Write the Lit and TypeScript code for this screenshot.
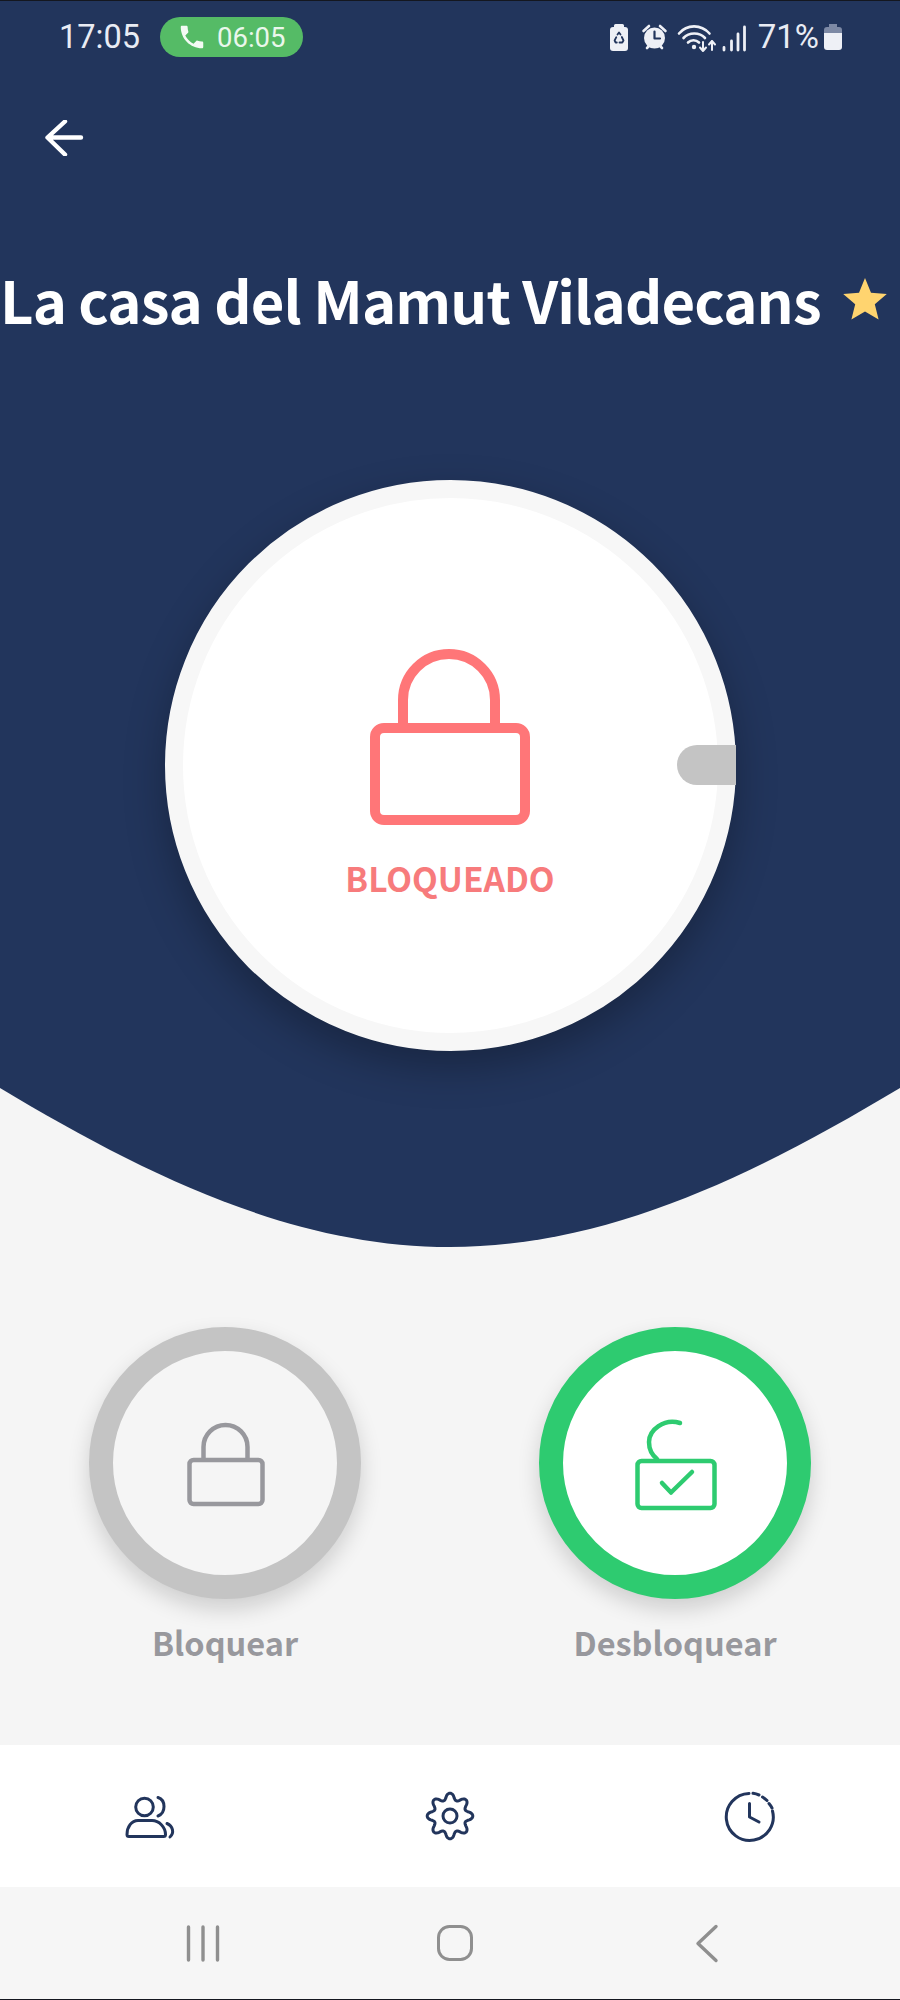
import { LitElement, html, css, svg } from "lit";
import { customElement } from "lit/decorators.js";

const gearPath = () => {
  const pts: string[] = [];
  const n = 160;
  for (let i = 0; i < n; i++) {
    const t = (i / n) * Math.PI * 2;
    const c = Math.cos(8 * t);
    const r = 19.6 + 3.2 * (Math.sign(c) * Math.pow(Math.abs(c), 0.8));
    const x = 450 + r * Math.sin(t);
    const y = 1816 - r * Math.cos(t);
    pts.push(`${x.toFixed(2)} ${y.toFixed(2)}`);
  }
  return "M" + pts.join("L") + "Z";
};

@customElement("app-root")
export class AppRoot extends LitElement {
  static styles = css`
    :host { display: block; width: 900px; height: 2000px; background: #f5f5f5; overflow: hidden; }
    svg { display: block; }
    .page { display: flex; flex-direction: column; width: 900px; height: 2000px; }
    .edge { height: 1px; background: #14171f; flex: none; }
    .hero {
      flex: none; height: 1247px; box-sizing: border-box; padding-top: 16px;
      background: #22355c; display: flex; flex-direction: column;
      clip-path: path("M0 0H900V1087C758 1172 610 1246 450 1246C290 1246 142 1172 0 1087Z");
    }
    .status { height: 40px; display: flex; align-items: center; padding: 0 58px 0 59px; color: #e9ecf4; font-family: Roboto, sans-serif; }
    .time { font-size: 32.5px; line-height: 40px; width: 81px; }
    .pill {
      margin-left: 20px; width: 143px; height: 40px; border-radius: 20px; background: #55bb66; color: #eaf7ec;
      display: flex; align-items: center; box-sizing: border-box; padding-left: 17px; gap: 10px;
      font-size: 27.5px;
    }
    .spacer { flex: 1; }
    .pct { font-size: 33px; line-height: 40px; margin: 0 5px 0 10px; }
    .back { margin: 63px 0 0 44px; }
    .title {
      margin-top: 103px; height: 80px; display: flex; align-items: center; gap: 22px;
      color: #fff; font: 700 58px/80px "Noto Sans CJK SC", "Noto Sans", sans-serif; white-space: nowrap;
      letter-spacing: -0.87px;
    }
    .dial {
      margin-top: 141px; align-self: center; width: 571px; height: 571px; box-sizing: border-box; flex: none;
      border: 18px solid #f7f7f7; border-radius: 50%; background: #fff; position: relative;
      box-shadow: 0 16px 40px rgba(0, 0, 0, 0.28);
      display: flex; flex-direction: column; align-items: center; padding-top: 151px;
    }
    .knob { position: absolute; right: -18px; top: 247px; width: 59px; height: 40px; background: #c4c4c4; border-radius: 20px 0 0 20px; }
    .state { margin-top: 31px; color: #f77b7c; font: 700 33.5px/44px "Noto Sans CJK SC", "Noto Sans", sans-serif; }
    .actions { flex: none; height: 497px; box-sizing: border-box; padding: 79px 0 0 89px; display: flex; gap: 178px; }
    .action { width: 272px; display: flex; flex-direction: column; align-items: center; }
    .ring {
      width: 272px; height: 272px; box-sizing: border-box; border: 24px solid #c4c4c4; border-radius: 50%;
      background: #f5f5f5; display: grid; place-items: center; box-shadow: 0 10px 22px rgba(0, 0, 0, 0.16);
    }
    .ring.on { border-color: #2ecb70; background: #fff; }
    .label { margin-top: 21px; color: #98989d; font: 600 32.5px/44px "Noto Sans CJK SC", "Noto Sans", sans-serif; white-space: nowrap; }
    .tabs { flex: none; height: 142px; background: #fff; display: grid; grid-template-columns: repeat(3, 300px); place-items: center; }
    .sysnav { flex: none; height: 112px; background: #f6f6f6; box-sizing: border-box; padding-left: 77px; display: grid; grid-template-columns: repeat(3, 252px); place-items: center; }
  `;

  render() {
    const navy = "#22355c";
    const white = "#eef0f6";
    const grey = "#8f8f8f";
    return html`
      <div class="page">
        <div class="edge"></div>
        <div class="hero">
          <div class="status">
            <span class="time">17:05</span>
            <div class="pill">
              <svg width="30" height="30" viewBox="0 0 24 24" fill="#f3fbf4"><path d="M6.62 10.79c1.44 2.83 3.76 5.14 6.59 6.59l2.2-2.2c.27-.27.67-.36 1.02-.24 1.12.37 2.33.57 3.57.57.55 0 1 .45 1 1V20c0 .55-.45 1-1 1-9.39 0-17-7.61-17-17 0-.55.45-1 1-1h3.5c.55 0 1 .45 1 1 0 1.25.2 2.45.57 3.57.11.35.03.74-.25 1.02l-2.2 2.2z"/></svg>
              <span>06:05</span>
            </div>
            <div class="spacer"></div>
            <svg width="140" height="40" viewBox="608 17 140 40" fill="none">
              <rect x="614" y="24" width="10" height="5" rx="1.5" fill="${white}"/>
              <rect x="610" y="27" width="18" height="24" rx="3" fill="${white}"/>
              <path d="M617.5 34.5l1.5-2 1.5 2M621.8 37l1.7 3.5-1.2 2H619.5M616.8 42.5h-1.2l-1-2 1.7-3.3" stroke="${navy}" stroke-width="1.8" stroke-linecap="round" stroke-linejoin="round"/>
              <circle cx="654.5" cy="38" r="10.5" fill="${white}"/>
              <path d="M654.5 31.5V38.5H660" stroke="${navy}" stroke-width="2.2" stroke-linecap="round" stroke-linejoin="round"/>
              <path d="M643.5 31l5.5-5M660 26l5.5 5M647 48l2.5-2.5M662 48l-2.5-2.5" stroke="${white}" stroke-width="2.6" stroke-linecap="round"/>
              <path d="M679 33.5C687 24 701 24 709.5 33.5M683.5 38C689 32 699.5 32 705 38M688 42.5C691 39.5 696 39.5 699 42.5" stroke="${white}" stroke-width="2.6" stroke-linecap="round"/>
              <circle cx="694" cy="47" r="2.2" fill="${white}"/>
              <path d="M703 42v9M700 47.5l3 3.5 3-3.5M712 50v-9M709 44.5l3-3.5 3 3.5" stroke="${white}" stroke-width="2" stroke-linecap="round" stroke-linejoin="round"/>
              <path d="M724 47.5V50M731.5 41V50M738 34V50M744.5 27V50" stroke="${white}" stroke-width="2.8" stroke-linecap="round"/>
            </svg>
            <span class="pct">71%</span>
            <svg width="18" height="28" viewBox="824 24 18 28">
              <path d="M829 25h8v3h2a3 3 0 0 1 3 3v3h-18v-3a3 3 0 0 1 3-3h2z" fill="#7d89a5"/>
              <path d="M824 34h18v14a3 3 0 0 1-3 3h-12a3 3 0 0 1-3-3z" fill="${white}"/>
            </svg>
          </div>
          <svg class="back" width="40" height="36" viewBox="44 120 40 36" fill="none">
            <path d="M81 137.5H48M65 121.5L47.5 137.5L65 154.5" stroke="#fff" stroke-width="4.4" stroke-linecap="round" stroke-linejoin="round"/>
          </svg>
          <div class="title">
            <span>La casa del Mamut Viladecans</span>
            <svg width="44" height="42" viewBox="0 0 44 42"><path d="M22 0l6 14.8 15.8 1.2-12 10.2 3.8 15.4L22 33.4 8.4 41.6l3.8-15.4-12-10.2L16 14.8z" fill="#ffd46f"/></svg>
          </div>
          <div class="dial">
            <svg width="160" height="176" viewBox="371 649 160 176" fill="none" stroke="#ff7678" stroke-width="10">
              <rect x="376" y="728" width="150" height="92" rx="9"/>
              <path d="M404 728V700A46 46 0 0 1 496 700V728"/>
            </svg>
            <div class="state">BLOQUEADO</div>
            <div class="knob"></div>
          </div>
        </div>
        <div class="actions">
          <div class="action">
            <div class="ring">
              <svg width="100" height="100" viewBox="175 1413 100 100" fill="none" stroke="#98989d" stroke-width="4.5">
                <rect x="189.5" y="1460" width="73" height="44" rx="4"/>
                <path d="M203.5 1460V1447A22 22 0 0 1 247.5 1447V1460"/>
              </svg>
            </div>
            <div class="label">Bloquear</div>
          </div>
          <div class="action">
            <div class="ring on">
              <svg width="100" height="100" viewBox="625 1413 100 100" fill="none" stroke="#2ecb70" stroke-width="4.5" stroke-linecap="round" stroke-linejoin="round">
                <rect x="637.5" y="1461" width="77" height="47" rx="4"/>
                <path d="M680 1423C664 1418 649 1430 649 1442C649 1449 652 1455 657 1459"/>
                <path d="M662 1483L671 1492.5L692 1472"/>
              </svg>
            </div>
            <div class="label">Desbloquear</div>
          </div>
        </div>
        <div class="tabs">
          <svg width="60" height="60" viewBox="120 1786 60 60" fill="none" stroke="${navy}" stroke-width="3" stroke-linecap="round" stroke-linejoin="round">
            <circle cx="144.5" cy="1807" r="8.8"/>
            <path d="M129 1836.5H163.5a2 2 0 0 0 2-2C165.5 1827 159 1820.5 152 1820.5H138C131.5 1820.5 127 1827 127 1834.5a2 2 0 0 0 2 2Z"/>
            <path d="M158 1797.5C166 1800 166 1813 158 1816"/>
            <path d="M167 1823.5C173 1826 174.5 1833 170 1837"/>
          </svg>
          <svg width="60" height="60" viewBox="420 1786 60 60" fill="none" stroke="${navy}" stroke-width="3" stroke-linejoin="round">
            ${svg`<path d="${gearPath()}"/>`}
            <circle cx="450" cy="1816" r="7"/>
          </svg>
          <svg width="60" height="60" viewBox="720 1786 60 60" fill="none" stroke="${navy}" stroke-width="3" stroke-linecap="round" stroke-linejoin="round">
            <path d="M772.5 1811A23.5 23.5 0 1 1 749 1793.5"/>
            <path d="M753 1793.3A23.5 23.5 0 0 1 759 1795M762.5 1797A23.5 23.5 0 0 1 767 1800.5M769 1803.5A23.5 23.5 0 0 1 772 1808"/>
            <path d="M749.5 1803.5V1817L759 1822"/>
          </svg>
        </div>
        <div class="sysnav">
          <svg width="36" height="40" viewBox="185 1922 36 40" fill="none" stroke="${grey}" stroke-width="3.4" stroke-linecap="round">
            <path d="M188.5 1926V1959M203 1926V1959M217.5 1926V1959"/>
          </svg>
          <svg width="40" height="40" viewBox="435 1922 40 40" fill="none" stroke="${grey}" stroke-width="3">
            <rect x="438.5" y="1925.5" width="33" height="33" rx="11"/>
          </svg>
          <svg width="30" height="40" viewBox="692.5 1922 30 40" fill="none" stroke="${grey}" stroke-width="3.4" stroke-linecap="round" stroke-linejoin="round">
            <path d="M716.5 1925.5L698.5 1942.5L716.5 1959.5"/>
          </svg>
        </div>
        <div class="edge"></div>
      </div>
    `;
  }
}
